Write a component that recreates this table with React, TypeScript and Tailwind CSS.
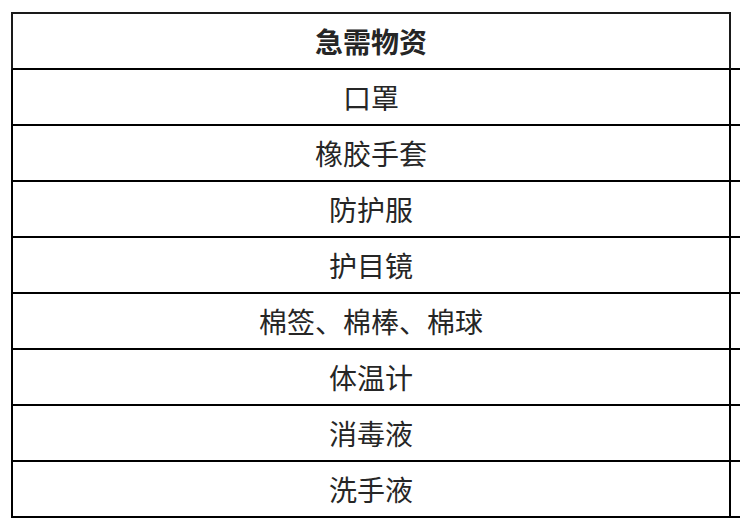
import React from "react";

const items = ["口罩", "橡胶手套", "防护服", "护目镜", "棉签、棉棒、棉球", "体温计", "消毒液", "洗手液"];

const App = () => {
  return (
    <div
      className="w-[740px] h-[524px] overflow-hidden bg-white pt-[12px] pl-[11px]"
      style={{ fontFamily: '"Noto Sans CJK SC", "Noto Sans", sans-serif' }}
    >
      <div className="flex flex-col w-[800px] text-[#262626]">
        {/* Header */}
        <div className="flex">
          <div className="w-[720px] h-[58px] shrink-0 border-2 border-[#1a1a1a] border-b-black flex items-center justify-center text-[28px] font-semibold">
            急需物资
          </div>
          <div className="flex-1 border-b-2 border-black" />
        </div>

        {/* Rows */}
        {items.map(item => (
          <div key={item} className="flex">
            <div className="w-[720px] h-[56px] shrink-0 border-x-2 border-b-2 border-black flex items-center justify-center text-[28px]">
              {item}
            </div>
            <div className="flex-1 border-b-2 border-black" />
          </div>
        ))}
      </div>
    </div>
  );
};

export default App;
